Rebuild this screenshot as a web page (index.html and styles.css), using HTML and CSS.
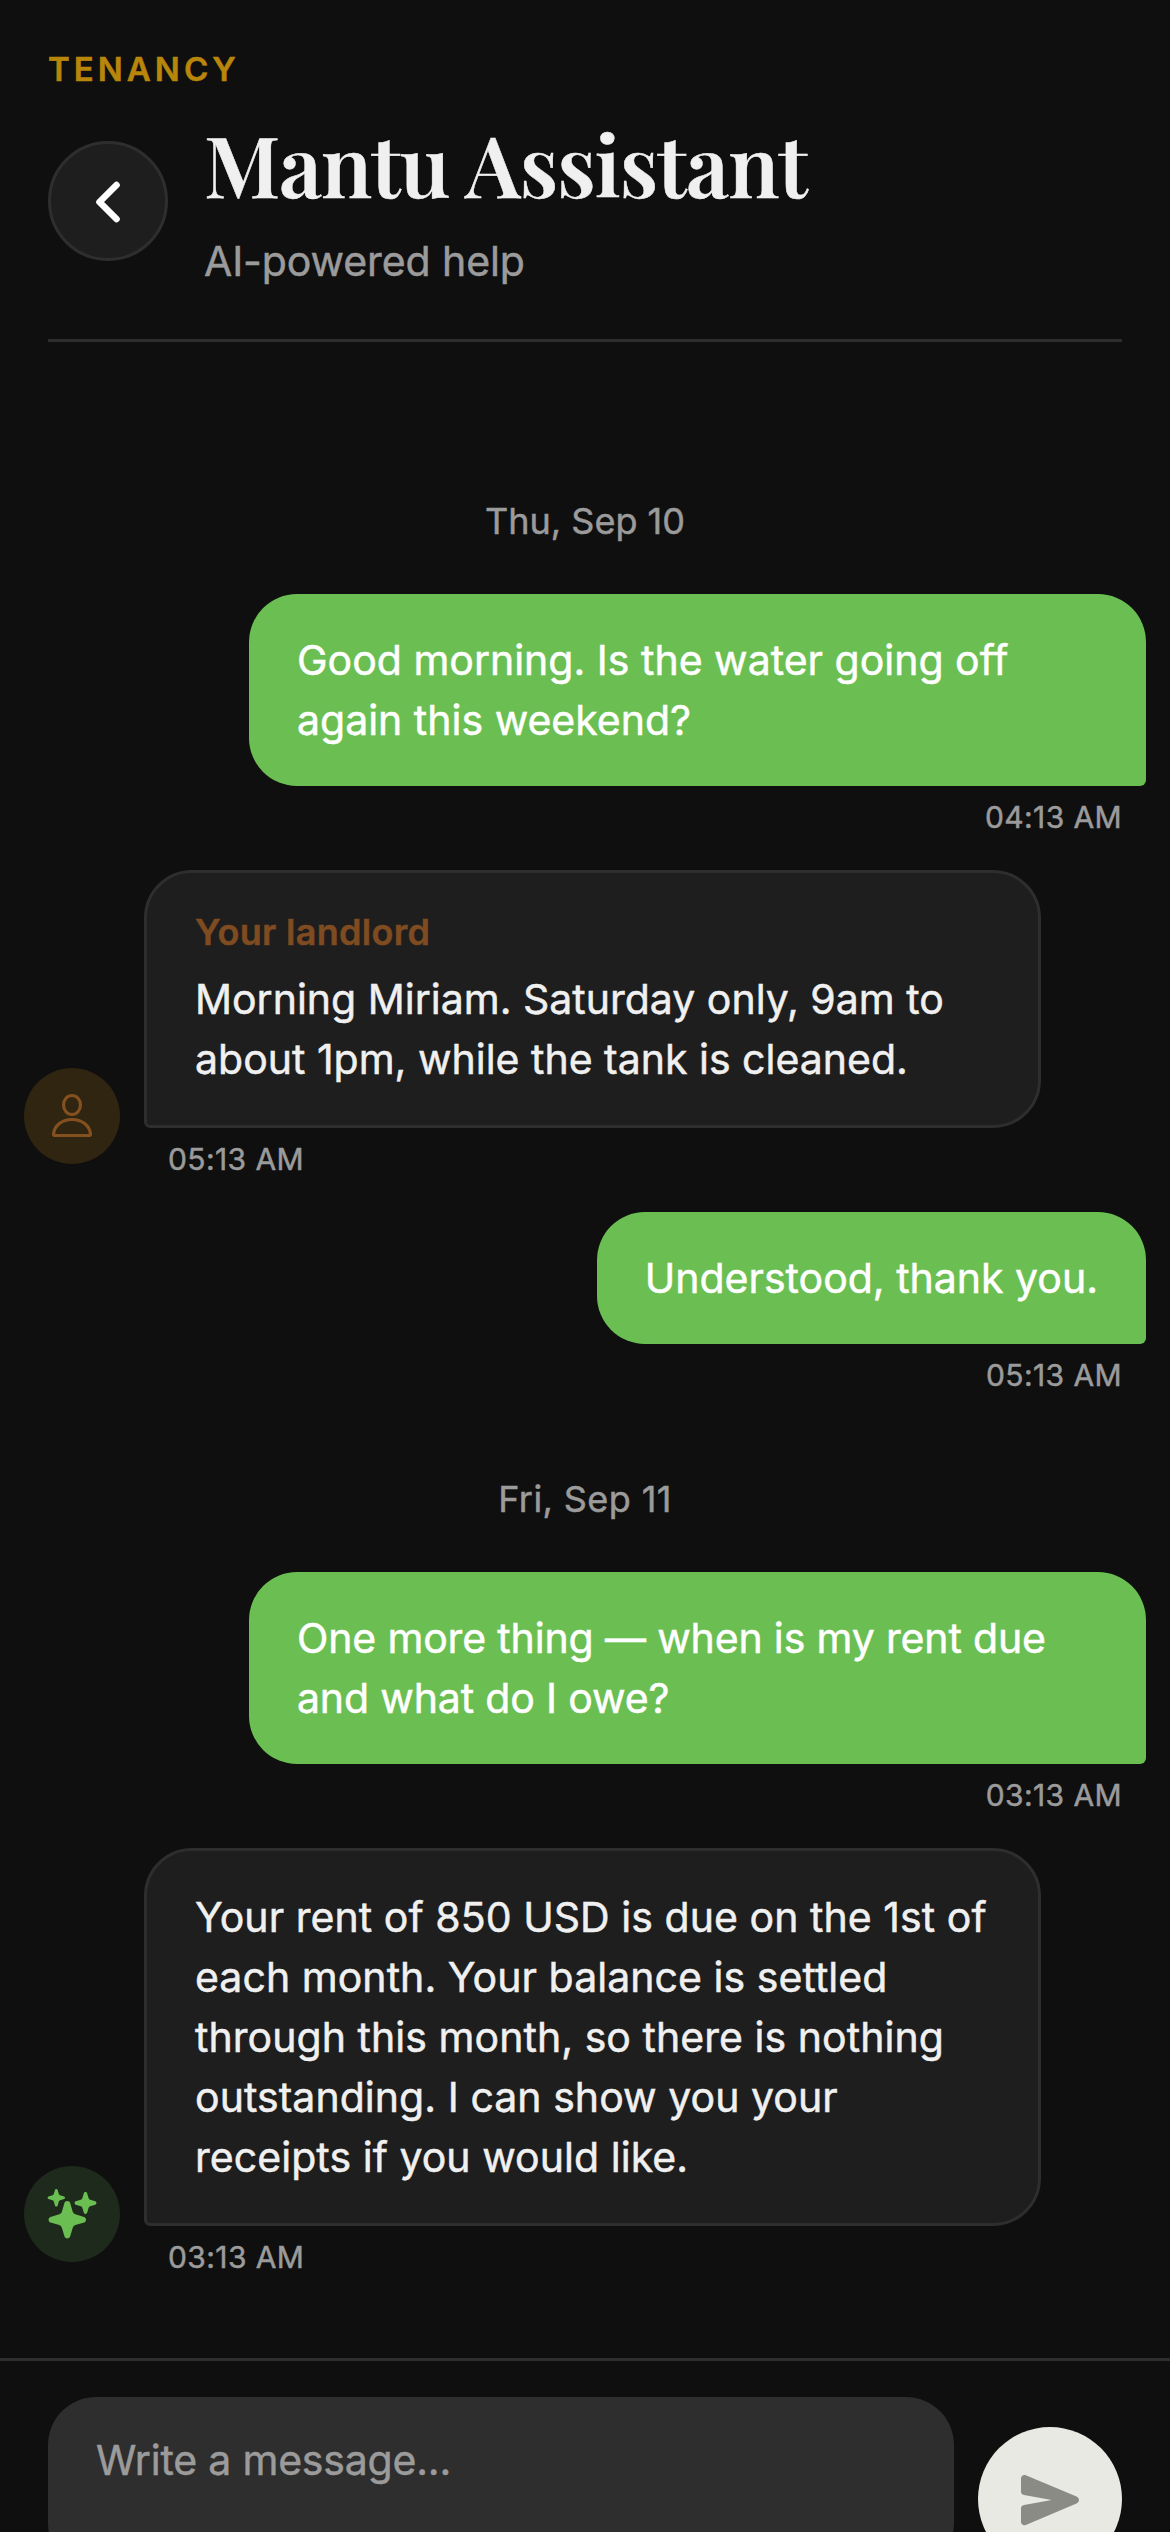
FILE: index.html
```html
<!DOCTYPE html>
<html lang="en">
<head>
<meta charset="utf-8">
<title>Mantu Assistant</title>
<link rel="stylesheet" href="styles.css">
</head>
<body>
<div class="screen">
  <header class="header">
    <div class="eyebrow">TENANCY</div>
    <div class="header-row">
      <button class="back" aria-label="Back">
        <svg viewBox="0 0 114 114"><path d="M65.500 41 48.500 58 65.500 75"/></svg>
      </button>
      <div class="titles">
        <h1 class="title">Mantu Assistant</h1>
        <p class="subtitle">AI-powered help</p>
      </div>
    </div>
  </header>

  <main class="chat">
    <div class="date">Thu, Sep 10</div>

    <div class="message sent">
      <div class="bubble">Good morning. Is the water going off again this weekend?</div>
      <div class="time">04:13 AM</div>
    </div>

    <div class="message received">
      <div class="avatar avatar-landlord">
        <svg viewBox="0 0 96 96"><ellipse cx="48" cy="37" rx="8.5" ry="9.5"/><path d="M31 67.5h34q1.7 0 1.5-1.7C65.500 57.500 58 51.500 48 51.500S30.500 57.500 29.500 65.800q-.2 1.700 1.500 1.700z"/></svg>
      </div>
      <div class="content">
        <div class="bubble">
          <div class="sender">Your landlord</div>
          Morning Miriam. Saturday only, 9am to about 1pm, while the tank is cleaned.
        </div>
        <div class="time">05:13 AM</div>
      </div>
    </div>

    <div class="message sent">
      <div class="bubble">Understood, thank you.</div>
      <div class="time">05:13 AM</div>
    </div>

    <div class="date">Fri, Sep 11</div>

    <div class="message sent">
      <div class="bubble tight">One more thing — when is my rent due and what do I owe?</div>
      <div class="time">03:13 AM</div>
    </div>

    <div class="message received">
      <div class="avatar avatar-ai">
        <svg viewBox="0 0 96 96">
          <defs><path id="star" d="M0-100C8-100 13-96 15-90L29-43Q32-33 43-29L90-15C96-13 100-8 100 0S96 13 90 15L43 29Q33 32 29 43L15 90C13 96 8 100 0 100S-13 96-15 90L-29 43Q-32 33-43 29L-90 15C-96 13-100 8-100 0S-96-13-90-15L-43-29Q-33-32-29-43L-15-90C-13-96-8-100 0-100z"/></defs>
          <use href="#star" transform="translate(43.300 53.700) scale(.187)"/>
          <use href="#star" transform="translate(32.300 31.800) scale(.087)"/>
          <use href="#star" transform="translate(61.500 37) scale(.109)"/>
        </svg>
      </div>
      <div class="content">
        <div class="bubble roomy">Your rent of 850 USD is due on the 1st of each month. Your balance is settled through this month, so there is nothing outstanding. I can show you your receipts if you would like.</div>
        <div class="time">03:13 AM</div>
      </div>
    </div>
  </main>

  <footer class="composer">
    <div class="input">Write a message...</div>
    <button class="send" aria-label="Send">
      <svg viewBox="0 0 144 144"><path d="M43 51.500c0-2.600 2.400-4.200 4.800-3.200L98.500 69.500c3.300 1.500 3.300 5.500 0 7L47.800 98c-2.400 1-4.800-.6-4.800-3.200V81.500c0-2 1.200-3.200 3-3.500L73.700 73 46 68c-1.800-.3-3-1.500-3-3.500z"/></svg>
    </button>
  </footer>
</div>
</body>
</html>
```
FILE: styles.css
```css
* { box-sizing: border-box; }

html, body {
  margin: 0;
  height: 2532px;
  overflow: hidden;
  background: #0f0f0f;
}

body {
  font-family: Inter, "Liberation Sans", sans-serif;
  color: #f0f0f0;
  -webkit-text-stroke: 0.5px currentColor;
}

button { border: 0; padding: 0; }
svg { display: block; width: 100%; height: 100%; }

.screen {
  display: flex;
  flex-direction: column;
  width: 1170px;
}

.header {
  margin: 0 48px;
  padding: 48px 0;
  border-bottom: 3px solid #2e2e2e;
}

.eyebrow {
  margin-bottom: 21px;
  font-size: 33px;
  font-weight: 600;
  line-height: 42px;
  letter-spacing: 4px;
  color: #b8860b;
}

.header-row { display: flex; align-items: center; gap: 36px; }

.back {
  width: 120px;
  height: 120px;
  border: 3px solid #2e2e2e;
  border-radius: 50%;
  background: #1e1e1e;
}

.back svg {
  fill: none;
  stroke: #fff;
  stroke-width: 6.6;
  stroke-linecap: round;
  stroke-linejoin: round;
}

.title {
  margin: 0 0 16px;
  font-family: "Playfair Display", "Liberation Serif", serif;
  font-size: 84px;
  font-weight: 600;
  line-height: 104px;
  letter-spacing: -0.84px;
}

.subtitle {
  margin: 0;
  font-size: 41px;
  line-height: 60px;
  letter-spacing: -0.1px;
  color: #9b9b9b;
}

.chat {
  display: flex;
  flex-direction: column;
  gap: 36px;
  padding: 107px 24px 84px;
}

.date {
  padding: 48px 0 13px;
  font-size: 36px;
  line-height: 48px;
  text-align: center;
  color: #9b9b9b;
}

.sent + .date {
  padding-top: 47px;
  letter-spacing: 0.4px;
}

.message { display: flex; }
.sent { flex-direction: column; align-items: flex-end; }
.received { align-items: flex-end; gap: 24px; }

.bubble {
  max-width: 897px;
  padding: 36px 48px;
  border-radius: 48px;
  font-size: 41px;
  line-height: 60px;
}

.tight { letter-spacing: -0.15px; }
.roomy { letter-spacing: 0.05px; }

.sent .bubble {
  border-bottom-right-radius: 6px;
  background: #6bbf52;
  color: #fff;
}

.received .bubble {
  border: 3px solid #2e2e2e;
  border-bottom-left-radius: 6px;
  background: #1e1e1e;
}

.sender {
  margin-bottom: 14px;
  font-size: 36px;
  font-weight: 600;
  line-height: 46px;
  letter-spacing: 0.3px;
  color: #7f4b20;
}

.time {
  margin: 14px 24px 0;
  font-size: 30px;
  line-height: 34px;
  letter-spacing: 0.4px;
  color: #9b9b9b;
}

.avatar {
  flex: none;
  width: 96px;
  height: 96px;
  margin-bottom: 12px;
  border-radius: 50%;
}

.avatar-landlord { background: #2f2510; }
.avatar-landlord svg { fill: none; stroke: #85501f; stroke-width: 3.2; }
.avatar-ai { background: #1e2a1b; }
.avatar-ai svg { fill: #6bbf52; }

.composer {
  display: flex;
  align-items: flex-end;
  gap: 24px;
  padding: 36px 48px;
  border-top: 3px solid #2e2e2e;
}

.input {
  flex: 1;
  height: 174px;
  padding: 33px 48px;
  border-radius: 48px;
  background: #2e2e2e;
  font-size: 41px;
  line-height: 60px;
  letter-spacing: -0.2px;
  color: #9b9b9b;
}

.send {
  width: 144px;
  height: 144px;
  border-radius: 50%;
  background: #e8e9e3;
}

.send svg { fill: #8a8b85; }
```
